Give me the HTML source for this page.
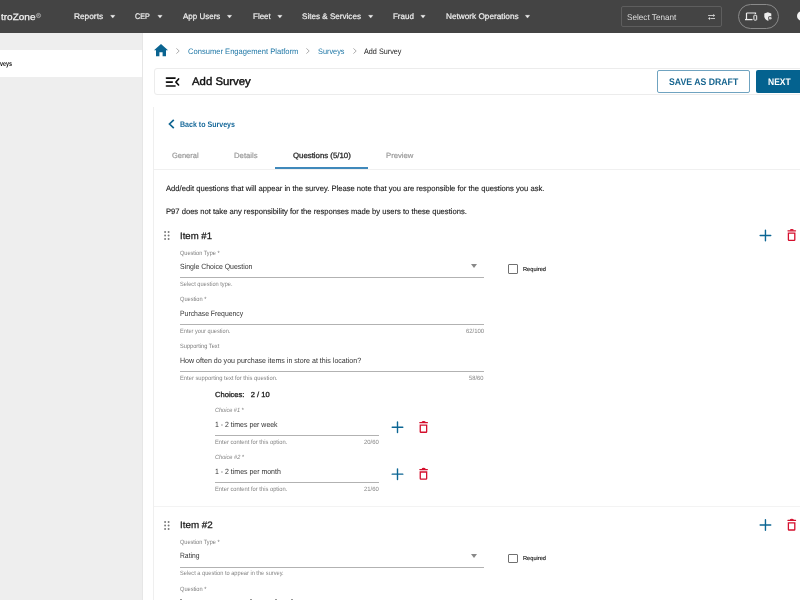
<!DOCTYPE html>
<html><head><meta charset="utf-8">
<style>
*{box-sizing:border-box;margin:0;padding:0}
html,body{width:800px;height:600px;overflow:hidden;background:#fff;font-family:"Liberation Sans",sans-serif;color:#222;position:relative}
body{will-change:transform}
.t{position:absolute;white-space:nowrap;line-height:1;text-rendering:geometricPrecision}
.r{position:absolute}
svg.r{overflow:visible}
</style></head><body>
<div class="r" style="left:0px;top:0px;width:800px;height:33px;background:#444"></div>
<div class="t" style="left:1.10px;top:12.78px;font-size:9.2px;font-weight:normal;-webkit-text-stroke:0.25px #f2f2f2;;color:#f2f2f2;transform:scaleX(1.0875);transform-origin:left top;">troZone</div>
<svg class="r" style="left:36px;top:13px" width="5" height="5" viewBox="0 0 5 5"><circle cx="2.5" cy="2.5" r="2.1" fill="none" stroke="#bbb" stroke-width="0.7"/><path d="M1.8 3.7V1.4H2.8C3.4 1.4 3.4 2.5 2.8 2.5H1.8M2.7 2.5L3.3 3.7" stroke="#bbb" stroke-width="0.5" fill="none"/></svg>
<div class="t" style="left:74.25px;top:13.45px;font-size:8.1px;font-weight:normal;-webkit-text-stroke:0.2px #f0f0f0;;color:#f0f0f0;transform:scaleX(1.0268);transform-origin:left top;">Reports</div>
<svg class="r" style="left:109px;top:13px" width="8" height="7" viewBox="0 0 8 7"><path d="M1.55 2.3H5.95L3.75 5.1Z" fill="#f0f0f0" stroke="#f0f0f0" stroke-width="0.3" stroke-linejoin="round"/></svg>
<div class="t" style="left:135.00px;top:13.45px;font-size:8.1px;font-weight:normal;-webkit-text-stroke:0.2px #f0f0f0;;color:#f0f0f0;transform:scaleX(0.8824);transform-origin:left top;">CEP</div>
<svg class="r" style="left:157px;top:13px" width="8" height="7" viewBox="0 0 8 7"><path d="M0.80 2.3H5.20L3.00 5.1Z" fill="#f0f0f0" stroke="#f0f0f0" stroke-width="0.3" stroke-linejoin="round"/></svg>
<div class="t" style="left:182.50px;top:13.45px;font-size:8.1px;font-weight:normal;-webkit-text-stroke:0.2px #f0f0f0;;color:#f0f0f0;transform:scaleX(0.9868);transform-origin:left top;">App Users</div>
<svg class="r" style="left:226px;top:13px" width="8" height="7" viewBox="0 0 8 7"><path d="M1.30 2.3H5.70L3.50 5.1Z" fill="#f0f0f0" stroke="#f0f0f0" stroke-width="0.3" stroke-linejoin="round"/></svg>
<div class="t" style="left:252.60px;top:13.45px;font-size:8.1px;font-weight:normal;-webkit-text-stroke:0.2px #f0f0f0;;color:#f0f0f0;transform:scaleX(0.9889);transform-origin:left top;">Fleet</div>
<svg class="r" style="left:276px;top:13px" width="8" height="7" viewBox="0 0 8 7"><path d="M1.70 2.3H6.10L3.90 5.1Z" fill="#f0f0f0" stroke="#f0f0f0" stroke-width="0.3" stroke-linejoin="round"/></svg>
<div class="t" style="left:302.00px;top:13.45px;font-size:8.1px;font-weight:normal;-webkit-text-stroke:0.2px #f0f0f0;;color:#f0f0f0;">Sites &amp; Services</div>
<svg class="r" style="left:367px;top:13px" width="8" height="7" viewBox="0 0 8 7"><path d="M1.50 2.3H5.90L3.70 5.1Z" fill="#f0f0f0" stroke="#f0f0f0" stroke-width="0.3" stroke-linejoin="round"/></svg>
<div class="t" style="left:393.00px;top:13.45px;font-size:8.1px;font-weight:normal;-webkit-text-stroke:0.2px #f0f0f0;;color:#f0f0f0;transform:scaleX(0.9857);transform-origin:left top;">Fraud</div>
<svg class="r" style="left:420px;top:13px" width="8" height="7" viewBox="0 0 8 7"><path d="M0.80 2.3H5.20L3.00 5.1Z" fill="#f0f0f0" stroke="#f0f0f0" stroke-width="0.3" stroke-linejoin="round"/></svg>
<div class="t" style="left:445.60px;top:13.45px;font-size:8.1px;font-weight:normal;-webkit-text-stroke:0.2px #f0f0f0;;color:#f0f0f0;transform:scaleX(1.0153);transform-origin:left top;">Network Operations</div>
<svg class="r" style="left:524px;top:13px" width="8" height="7" viewBox="0 0 8 7"><path d="M1.30 2.3H5.70L3.50 5.1Z" fill="#f0f0f0" stroke="#f0f0f0" stroke-width="0.3" stroke-linejoin="round"/></svg>
<div class="r" style="left:621.25px;top:6px;width:100.5px;height:20.7px;border:1px solid #5e5e5e;border-radius:2px"></div>
<div class="t" style="left:626.80px;top:12.63px;font-size:8.3px;font-weight:normal;;color:#dddddd;transform:scaleX(0.9840);transform-origin:left top;">Select Tenant</div>
<svg class="r" style="left:707px;top:13px" width="10" height="8" viewBox="0 0 10 8"><path d="M1.1 2.5H6.6M3.4 5.5H8.0" stroke="#ddd" stroke-width="0.85"/><path d="M6.2 1.1L8.1 2.5L6.2 3.9Z M3.0 4.1L1.1 5.5L3.0 6.9Z" fill="#ddd"/></svg>
<div class="r" style="left:738px;top:4px;width:40.6px;height:25px;border:1px solid #8a8a8a;border-radius:13px"></div>
<svg class="r" style="left:744.5px;top:12px" width="13" height="9" viewBox="0 0 13 9"><path d="M1.5 1H10.5V2" stroke="#eee" stroke-width="1.2" fill="none"/><path d="M1.5 1V7" stroke="#eee" stroke-width="1.2"/><path d="M0 7.6H7.5" stroke="#eee" stroke-width="1.3"/><rect x="8.9" y="3.2" width="2.8" height="4.9" rx="0.6" stroke="#eee" stroke-width="1.0" fill="none"/></svg>
<svg class="r" style="left:764.3px;top:12px" width="9" height="9" viewBox="0 0 9 9"><path d="M3.8 0.3L7.3 1.6V4.3C7.3 6.5 5.7 8.2 3.8 8.7C1.9 8.2 0.3 6.5 0.3 4.3V1.6Z" fill="#eee"/><circle cx="6.2" cy="6.2" r="2.2" fill="#444"/><circle cx="6.2" cy="6.2" r="1.4" fill="#ccc"/></svg>
<div class="r" style="left:797.4px;top:11.4px;width:11px;height:10px;border-radius:50%;background:#f4f4f4"></div>
<div class="r" style="left:0px;top:33px;width:142.5px;height:567px;background:#eeeeee"></div>
<div class="r" style="left:142.2px;top:33px;width:1px;height:567px;background:#e6e6e6"></div>
<div class="r" style="left:0px;top:49.8px;width:142.2px;height:27.3px;background:#fff"></div>
<div class="t" style="left:0.40px;top:60.42px;font-size:7.2px;font-weight:bold;;color:#111;transform:scaleX(0.7500);transform-origin:left top;">veys</div>
<svg class="r" style="left:154px;top:44.1px" width="14" height="12.5" viewBox="0 0 14 12.5"><path d="M7 0L14 6.3H12V12.3H8.6V8.2H5.4V12.3H2V6.3H0Z" fill="#0a6491"/></svg>
<svg class="r" style="left:175.8px;top:48px" width="4" height="6" viewBox="0 0 4 6"><path d="M0.4 0.4L3.2 3L0.4 5.6" stroke="#999" stroke-width="0.8" fill="none"/></svg>
<svg class="r" style="left:306.4px;top:48px" width="4" height="6" viewBox="0 0 4 6"><path d="M0.4 0.4L3.2 3L0.4 5.6" stroke="#999" stroke-width="0.8" fill="none"/></svg>
<svg class="r" style="left:353px;top:48px" width="4" height="6" viewBox="0 0 4 6"><path d="M0.4 0.4L3.2 3L0.4 5.6" stroke="#999" stroke-width="0.8" fill="none"/></svg>
<div class="t" style="left:187.50px;top:47.79px;font-size:7.9px;font-weight:normal;;color:#1f77a6;transform:scaleX(0.9609);transform-origin:left top;">Consumer Engagement Platform</div>
<div class="t" style="left:318.00px;top:47.79px;font-size:7.9px;font-weight:normal;;color:#1f77a6;transform:scaleX(0.9286);transform-origin:left top;">Surveys</div>
<div class="t" style="left:364.40px;top:47.79px;font-size:7.9px;font-weight:normal;;color:#222;transform:scaleX(0.9171);transform-origin:left top;">Add Survey</div>
<div class="r" style="left:154px;top:68.2px;width:660px;height:26.8px;border:1px solid #ececec;border-radius:3px;background:#fff"></div>
<svg class="r" style="left:165px;top:77px" width="15" height="10" viewBox="0 0 15 10"><path d="M1.45 1.1H10.05M1.45 5.1H7.3M1.45 8.95H10.05" stroke="#0d0d0d" stroke-width="1.65" stroke-linecap="round"/><path d="M13.6 1.9L10.9 5.1L13.6 8.0" stroke="#0d0d0d" stroke-width="1.6" fill="none" stroke-linecap="round" stroke-linejoin="round"/></svg>
<div class="t" style="left:191.80px;top:77.47px;font-size:11.0px;font-weight:normal;-webkit-text-stroke:0.4px #111;;color:#111;transform:scaleX(1.0342);transform-origin:left top;">Add Survey</div>
<div class="r" style="left:657px;top:70.4px;width:93px;height:22.2px;border:1px solid #6fa3c0;border-radius:2px;background:#fff"></div>
<div class="t" style="left:669.00px;top:78.21px;font-size:9.6px;font-weight:bold;;color:#17658f;transform:scaleX(0.9079);transform-origin:left top;">SAVE AS DRAFT</div>
<div class="r" style="left:756px;top:70.4px;width:60px;height:22.2px;background:#04628f;border-radius:2px"></div>
<div class="t" style="left:768.00px;top:78.21px;font-size:9.6px;font-weight:bold;;color:#ffffff;transform:scaleX(0.8846);transform-origin:left top;">NEXT</div>
<div class="r" style="left:153.2px;top:107px;width:1px;height:493px;background:#efefef"></div>
<svg class="r" style="left:168px;top:119.3px" width="7" height="10" viewBox="0 0 7 10"><path d="M5.8 0.8L1.5 5L5.8 9.2" stroke="#0f6592" stroke-width="1.7" fill="none"/></svg>
<div class="t" style="left:180.25px;top:121.14px;font-size:8.0px;font-weight:bold;;color:#17699a;transform:scaleX(0.8831);transform-origin:left top;">Back to Surveys</div>
<div class="t" style="left:171.70px;top:152.16px;font-size:7.6px;font-weight:normal;-webkit-text-stroke:0.2px #9a9a9a;;color:#9a9a9a;transform:scaleX(0.9833);transform-origin:left top;">General</div>
<div class="t" style="left:233.80px;top:152.16px;font-size:7.6px;font-weight:normal;-webkit-text-stroke:0.2px #9a9a9a;;color:#9a9a9a;transform:scaleX(1.0174);transform-origin:left top;">Details</div>
<div class="t" style="left:293.00px;top:151.57px;font-size:7.6px;font-weight:normal;-webkit-text-stroke:0.3px #2a2a2a;;color:#2a2a2a;transform:scaleX(1.0286);transform-origin:left top;">Questions (5/10)</div>
<div class="t" style="left:386.00px;top:152.16px;font-size:7.6px;font-weight:normal;-webkit-text-stroke:0.2px #9a9a9a;;color:#9a9a9a;transform:scaleX(1.0148);transform-origin:left top;">Preview</div>
<div class="r" style="left:154px;top:169.3px;width:646px;height:1px;background:#f0f0f0"></div>
<div class="r" style="left:275px;top:167.4px;width:93.4px;height:2px;background:#4089bb"></div>
<div class="t" style="left:165.50px;top:185.19px;font-size:7.8px;font-weight:normal;-webkit-text-stroke:0.12px #1a1a1a;;color:#1a1a1a;transform:scaleX(0.9793);transform-origin:left top;">Add/edit questions that will appear in the survey. Please note that you are responsible for the questions you ask.</div>
<div class="t" style="left:165.50px;top:208.04px;font-size:7.8px;font-weight:normal;-webkit-text-stroke:0.12px #1a1a1a;;color:#1a1a1a;transform:scaleX(0.9763);transform-origin:left top;">P97 does not take any responsibility for the responses made by users to these questions.</div>
<svg class="r" style="left:163.8px;top:231px" width="7" height="9.5" viewBox="0 0 7 9.5"><circle cx="1.10" cy="1.00" r="0.95" fill="#777"/><circle cx="1.10" cy="4.50" r="0.95" fill="#777"/><circle cx="1.10" cy="8.00" r="0.95" fill="#777"/><circle cx="4.60" cy="1.00" r="0.95" fill="#777"/><circle cx="4.60" cy="4.50" r="0.95" fill="#777"/><circle cx="4.60" cy="8.00" r="0.95" fill="#777"/></svg>
<div class="t" style="left:179.80px;top:230.68px;font-size:9.4px;font-weight:normal;-webkit-text-stroke:0.25px #1a1a1a;;color:#1a1a1a;transform:scaleX(1.0226);transform-origin:left top;">Item #1</div>
<svg class="r" style="left:758px;top:228px" width="14" height="14" viewBox="0 0 14 14"><path d="M7.45 2.15V12.75M2.15 7.45H12.75" stroke="#0c6694" stroke-width="1.4" stroke-linecap="round"/></svg>
<svg class="r" style="left:786px;top:229px" width="11" height="13" viewBox="0 0 11 13"><g transform="translate(0.90 0.40)"><path d="M1.1 1.4H8.6" stroke="#d40f2d" stroke-width="1.3" stroke-linecap="round"/><path d="M3.4 0.9Q3.6 0.2 4.9 0.2Q6.2 0.2 6.5 0.9" stroke="#d40f2d" stroke-width="1.1" fill="#d40f2d"/><path d="M1.5 3.8H7.9V10.4Q7.9 11.0 7.3 11.0H2.1Q1.5 11.0 1.5 10.4Z" stroke="#d40f2d" stroke-width="1.3" fill="none"/></g></svg>
<div class="t" style="left:179.75px;top:250.50px;font-size:6.2px;font-weight:normal;;color:#7e7e7e;transform:scaleX(0.9011);transform-origin:left top;">Question Type *</div>
<div class="t" style="left:179.75px;top:262.80px;font-size:7.6px;font-weight:normal;;color:#333333;transform:scaleX(0.9133);transform-origin:left top;">Single Choice Question</div>
<div class="r" style="left:179.75px;top:277.1px;width:304.6px;height:1px;background:#b2b2b2"></div>
<div class="t" style="left:179.75px;top:282.40px;font-size:6.2px;font-weight:normal;;color:#858585;transform:scaleX(0.9149);transform-origin:left top;">Select question type.</div>
<div class="r" style="left:470.55px;top:264.10px;width:0;height:0;border-left:3.4px solid transparent;border-right:3.4px solid transparent;border-top:4.1px solid #888"></div>
<div class="r" style="left:508.1px;top:264px;width:10px;height:9.8px;border:1.2px solid #707070;border-radius:1px"></div>
<div class="t" style="left:523.10px;top:267.79px;font-size:5.7px;font-weight:normal;-webkit-text-stroke:0.15px #1e1e1e;;color:#1e1e1e;transform:scaleX(0.9957);transform-origin:left top;">Required</div>
<div class="t" style="left:179.75px;top:297.40px;font-size:6.2px;font-weight:normal;;color:#7e7e7e;transform:scaleX(0.9138);transform-origin:left top;">Question *</div>
<div class="t" style="left:179.75px;top:309.80px;font-size:7.6px;font-weight:normal;;color:#333333;transform:scaleX(0.9021);transform-origin:left top;">Purchase Frequency</div>
<div class="r" style="left:179.75px;top:324px;width:304.4px;height:1px;background:#b2b2b2"></div>
<div class="t" style="left:179.75px;top:329.00px;font-size:6.2px;font-weight:normal;;color:#858585;transform:scaleX(0.9091);transform-origin:left top;">Enter your question.</div>
<div class="t" style="left:465.95px;top:329.00px;font-size:6.2px;font-weight:normal;;color:#858585;transform:scaleX(0.9579);transform-origin:left top;">62/100</div>
<div class="t" style="left:179.75px;top:344.25px;font-size:6.2px;font-weight:normal;;color:#7e7e7e;transform:scaleX(0.9151);transform-origin:left top;">Supporting Text</div>
<div class="t" style="left:179.75px;top:356.70px;font-size:7.6px;font-weight:normal;;color:#333333;transform:scaleX(0.9308);transform-origin:left top;">How often do you purchase items in store at this location?</div>
<div class="r" style="left:179.75px;top:371px;width:304.4px;height:1px;background:#b2b2b2"></div>
<div class="t" style="left:179.75px;top:375.90px;font-size:6.2px;font-weight:normal;;color:#858585;transform:scaleX(0.9351);transform-origin:left top;">Enter supporting text for this question.</div>
<div class="t" style="left:469.25px;top:375.90px;font-size:6.2px;font-weight:normal;;color:#858585;transform:scaleX(0.9313);transform-origin:left top;">58/60</div>
<div class="t" style="left:215.00px;top:391.38px;font-size:7.3px;font-weight:normal;-webkit-text-stroke:0.3px #222;;color:#222;transform:scaleX(1.0377);transform-origin:left top;">Choices: &nbsp; 2 / 10</div>
<div class="t" style="left:215.00px;top:408.40px;font-size:6.2px;font-weight:normal;font-style:italic;;color:#7e7e7e;transform:scaleX(0.8984);transform-origin:left top;">Choice #1 *</div>
<div class="t" style="left:215.00px;top:420.80px;font-size:7.6px;font-weight:normal;;color:#333333;transform:scaleX(0.9154);transform-origin:left top;">1 - 2 times per week</div>
<div class="r" style="left:215px;top:435.0px;width:164px;height:1px;background:#b2b2b2"></div>
<div class="t" style="left:215.00px;top:440.25px;font-size:6.2px;font-weight:normal;;color:#858585;transform:scaleX(0.9338);transform-origin:left top;">Enter content for this option.</div>
<div class="t" style="left:363.70px;top:440.25px;font-size:6.2px;font-weight:normal;;color:#858585;transform:scaleX(0.9563);transform-origin:left top;">20/60</div>
<svg class="r" style="left:390px;top:420px" width="14" height="14" viewBox="0 0 14 14"><path d="M7.50 1.90V12.50M2.20 7.20H12.80" stroke="#0c6694" stroke-width="1.4" stroke-linecap="round"/></svg>
<svg class="r" style="left:418px;top:421px" width="11" height="13" viewBox="0 0 11 13"><g transform="translate(0.75 0.25)"><path d="M1.1 1.4H8.6" stroke="#d40f2d" stroke-width="1.3" stroke-linecap="round"/><path d="M3.4 0.9Q3.6 0.2 4.9 0.2Q6.2 0.2 6.5 0.9" stroke="#d40f2d" stroke-width="1.1" fill="#d40f2d"/><path d="M1.5 3.8H7.9V10.4Q7.9 11.0 7.3 11.0H2.1Q1.5 11.0 1.5 10.4Z" stroke="#d40f2d" stroke-width="1.3" fill="none"/></g></svg>
<div class="t" style="left:215.00px;top:455.25px;font-size:6.2px;font-weight:normal;font-style:italic;;color:#7e7e7e;transform:scaleX(0.9062);transform-origin:left top;">Choice #2 *</div>
<div class="t" style="left:215.00px;top:467.95px;font-size:7.6px;font-weight:normal;;color:#333333;transform:scaleX(0.9167);transform-origin:left top;">1 - 2 times per month</div>
<div class="r" style="left:215px;top:482.4px;width:164px;height:1px;background:#b2b2b2"></div>
<div class="t" style="left:215.00px;top:487.00px;font-size:6.2px;font-weight:normal;;color:#858585;transform:scaleX(0.9338);transform-origin:left top;">Enter content for this option.</div>
<div class="t" style="left:363.70px;top:487.00px;font-size:6.2px;font-weight:normal;;color:#858585;transform:scaleX(0.9563);transform-origin:left top;">21/60</div>
<svg class="r" style="left:390px;top:467px" width="14" height="14" viewBox="0 0 14 14"><path d="M7.50 1.85V12.45M2.20 7.15H12.80" stroke="#0c6694" stroke-width="1.4" stroke-linecap="round"/></svg>
<svg class="r" style="left:418px;top:468px" width="11" height="13" viewBox="0 0 11 13"><g transform="translate(0.75 0.20)"><path d="M1.1 1.4H8.6" stroke="#d40f2d" stroke-width="1.3" stroke-linecap="round"/><path d="M3.4 0.9Q3.6 0.2 4.9 0.2Q6.2 0.2 6.5 0.9" stroke="#d40f2d" stroke-width="1.1" fill="#d40f2d"/><path d="M1.5 3.8H7.9V10.4Q7.9 11.0 7.3 11.0H2.1Q1.5 11.0 1.5 10.4Z" stroke="#d40f2d" stroke-width="1.3" fill="none"/></g></svg>
<div class="r" style="left:154px;top:506px;width:646px;height:1px;background:#f3f3f3"></div>
<svg class="r" style="left:164px;top:520.6px" width="7" height="9.5" viewBox="0 0 7 9.5"><circle cx="1.10" cy="1.00" r="0.95" fill="#777"/><circle cx="1.10" cy="4.50" r="0.95" fill="#777"/><circle cx="1.10" cy="8.00" r="0.95" fill="#777"/><circle cx="4.60" cy="1.00" r="0.95" fill="#777"/><circle cx="4.60" cy="4.50" r="0.95" fill="#777"/><circle cx="4.60" cy="8.00" r="0.95" fill="#777"/></svg>
<div class="t" style="left:179.75px;top:520.08px;font-size:9.4px;font-weight:normal;-webkit-text-stroke:0.25px #1a1a1a;;color:#1a1a1a;transform:scaleX(1.0484);transform-origin:left top;">Item #2</div>
<svg class="r" style="left:758px;top:518px" width="14" height="14" viewBox="0 0 14 14"><path d="M7.45 1.75V12.35M2.15 7.05H12.75" stroke="#0c6694" stroke-width="1.4" stroke-linecap="round"/></svg>
<svg class="r" style="left:786px;top:519px" width="11" height="13" viewBox="0 0 11 13"><g transform="translate(0.90 0.00)"><path d="M1.1 1.4H8.6" stroke="#d40f2d" stroke-width="1.3" stroke-linecap="round"/><path d="M3.4 0.9Q3.6 0.2 4.9 0.2Q6.2 0.2 6.5 0.9" stroke="#d40f2d" stroke-width="1.1" fill="#d40f2d"/><path d="M1.5 3.8H7.9V10.4Q7.9 11.0 7.3 11.0H2.1Q1.5 11.0 1.5 10.4Z" stroke="#d40f2d" stroke-width="1.3" fill="none"/></g></svg>
<div class="t" style="left:179.75px;top:540.00px;font-size:6.2px;font-weight:normal;;color:#7e7e7e;transform:scaleX(0.9011);transform-origin:left top;">Question Type *</div>
<div class="t" style="left:179.75px;top:552.30px;font-size:7.6px;font-weight:normal;;color:#333333;transform:scaleX(0.8886);transform-origin:left top;">Rating</div>
<div class="r" style="left:179.75px;top:567px;width:304.6px;height:1px;background:#b2b2b2"></div>
<div class="t" style="left:179.75px;top:571.40px;font-size:6.2px;font-weight:normal;;color:#858585;transform:scaleX(0.9137);transform-origin:left top;">Select a question to appear in the survey.</div>
<div class="r" style="left:470.55px;top:553.60px;width:0;height:0;border-left:3.4px solid transparent;border-right:3.4px solid transparent;border-top:4.1px solid #888"></div>
<div class="r" style="left:508.1px;top:553.6px;width:10px;height:9.8px;border:1.2px solid #707070;border-radius:1px"></div>
<div class="t" style="left:523.10px;top:557.39px;font-size:5.7px;font-weight:normal;-webkit-text-stroke:0.15px #1e1e1e;;color:#1e1e1e;transform:scaleX(0.9957);transform-origin:left top;">Required</div>
<div class="t" style="left:179.75px;top:587.10px;font-size:6.2px;font-weight:normal;;color:#7e7e7e;transform:scaleX(0.9138);transform-origin:left top;">Question *</div>
<div class="r" style="left:179.6px;top:599.2px;width:2.6px;height:0.8px;background:#9a9a9a"></div>
<div class="r" style="left:250.4px;top:599.2px;width:1.4px;height:0.8px;background:#9a9a9a"></div>
<div class="r" style="left:275.3px;top:599.2px;width:1.4px;height:0.8px;background:#9a9a9a"></div>
<div class="r" style="left:291.3px;top:599.2px;width:1.4px;height:0.8px;background:#9a9a9a"></div>
</body></html>
